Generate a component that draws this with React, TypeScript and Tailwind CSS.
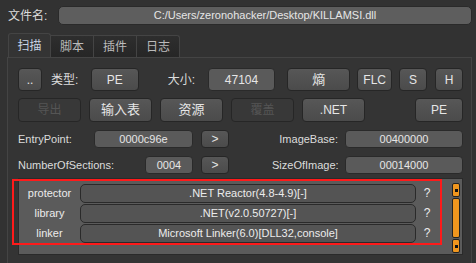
import React from 'react'

const font = { fontFamily: '"Liberation Sans", "Noto Sans CJK SC", sans-serif' }

function Btn({ children, className = '', disabled = false }: { children: React.ReactNode; className?: string; disabled?: boolean }) {
  return (
    <div
      className={
        'flex items-center justify-center rounded-[4px] border text-[12px] ' +
        (disabled
          ? 'border-[#262626] bg-[#383838] text-[#555555] '
          : 'border-[#262626] bg-gradient-to-b from-[#575757] to-[#4b4b4b] text-[#e6e6e6] ') +
        className
      }
    >
      {children}
    </div>
  )
}

function Field({ children, className = '' }: { children: React.ReactNode; className?: string }) {
  return (
    <div className={'flex items-center justify-center rounded-[4px] border border-[#2a2a2a] bg-[#5a5a5a] text-[11px] text-[#e6e6e6] ' + className}>
      {children}
    </div>
  )
}

const detections = [
  { type: 'protector', value: '.NET Reactor(4.8-4.9)[-]' },
  { type: 'library', value: '.NET(v2.0.50727)[-]' },
  { type: 'linker', value: 'Microsoft Linker(6.0)[DLL32,console]' },
]

export default function App() {
  return (
    <div className="relative h-[263px] w-[476px] overflow-hidden bg-[#323232] text-[#dcdcdc]" style={font}>
      {/* file name */}
      <div className="flex h-[19px] items-center pl-[8px] pr-[4px] mt-[6px]">
        <span className="w-[50px] text-[12px]">文件名:</span>
        <div className="flex h-[19px] flex-1 items-center justify-center rounded-[5px] border border-[#2a2a2a] bg-[#5e5e5e] text-[11px] text-[#e6e6e6]">
          C:/Users/zeronohacker/Desktop/KILLAMSI.dll
        </div>
      </div>

      {/* tabs */}
      <div className="mt-[8px] flex h-[24px] items-end pl-[8px]">
        <div className="flex h-[24px] w-[43px] items-center justify-center rounded-t-[3px] border border-b-0 border-[#444444] bg-[#343434] text-[12px] text-[#c8d4e6]">扫描</div>
        <div className="flex h-[22px] w-[43px] items-center justify-center border border-l-0 border-b-0 border-[#444444] bg-gradient-to-b from-[#2e2e2e] to-[#262626] text-[12px] text-[#bbbbbb]">脚本</div>
        <div className="flex h-[22px] w-[43px] items-center justify-center border border-l-0 border-b-0 border-[#444444] bg-gradient-to-b from-[#2e2e2e] to-[#262626] text-[12px] text-[#bbbbbb]">插件</div>
        <div className="flex h-[22px] w-[43px] items-center justify-center rounded-tr-[3px] border border-l-0 border-b-0 border-[#444444] bg-gradient-to-b from-[#2e2e2e] to-[#262626] text-[12px] text-[#bbbbbb]">日志</div>
      </div>

      {/* main panel */}
      <div className="ml-[7px] mr-[4px] h-[220px] border border-[#444444] bg-[#343434] pl-[10px] pr-[8px] pt-[10px]">
        <div className="flex h-[23px] items-center">
          <Btn className="h-[23px] w-[24px]">..</Btn>
          <span className="ml-[9px] w-[40px] text-[12px]">类型:</span>
          <Btn className="h-[23px] w-[48px]">PE</Btn>
          <span className="ml-[29px] w-[40px] text-[12px]">大小:</span>
          <Field className="h-[23px] w-[68px] text-[12px]">47104</Field>
          <Btn className="ml-[12px] h-[23px] w-[63px] text-[13px]">熵</Btn>
          <Btn className="ml-[7px] h-[23px] w-[35px]">FLC</Btn>
          <Btn className="ml-[7px] h-[23px] w-[28px]">S</Btn>
          <Btn className="ml-[8px] h-[23px] w-[28px]">H</Btn>
        </div>

        <div className="mt-[7px] flex h-[24px] items-center">
          <Btn disabled className="h-[24px] w-[63px]">导出</Btn>
          <Btn className="ml-[8px] h-[24px] w-[63px] text-[13px]">输入表</Btn>
          <Btn className="ml-[8px] h-[24px] w-[63px] text-[13px]">资源</Btn>
          <Btn disabled className="ml-[8px] h-[24px] w-[63px]">覆盖</Btn>
          <Btn className="ml-[8px] h-[24px] w-[63px]">.NET</Btn>
          <Btn className="ml-auto h-[24px] w-[48px]">PE</Btn>
        </div>

        <div className="mt-[8px] flex h-[18px] items-center text-[11px]">
          <span className="w-[76px]">EntryPoint:</span>
          <Field className="h-[18px] w-[99px]">0000c96e</Field>
          <Btn className="ml-[8px] h-[18px] w-[28px] text-[11px]">&gt;</Btn>
          <span className="ml-auto mr-[7px] w-[66px] text-right">ImageBase:</span>
          <Field className="h-[18px] w-[118px]">00400000</Field>
        </div>

        <div className="mt-[8px] flex h-[18px] items-center text-[11px]">
          <span className="w-[127px]">NumberOfSections:</span>
          <Field className="h-[18px] w-[48px]">0004</Field>
          <Btn className="ml-[8px] h-[18px] w-[28px] text-[11px]">&gt;</Btn>
          <span className="ml-auto mr-[7px] w-[66px] text-right">SizeOfImage:</span>
          <Field className="h-[18px] w-[118px]">00014000</Field>
        </div>

        {/* detections */}
        <div className="mt-[4px] flex h-[77px] border border-[#2a2a2a] bg-[#5b5b5b] pr-[2px] pt-[4px]">
          <div className="flex flex-1 flex-col">
            {detections.map(d => (
              <div key={d.type} className="flex h-[20px] items-center text-[11px]">
                <span className="w-[61px] text-center text-[#ececec]">{d.type}</span>
                <div className="flex h-[19px] flex-1 items-center justify-center rounded-[5px] border border-[#2a2a2a] bg-[#545454] text-[#ececec]">
                  {d.value}
                </div>
                <span className="w-[22px] text-center text-[12px] text-[#ececec]">?</span>
              </div>
            ))}
          </div>
          {/* scrollbar */}
          <div className="ml-[14px] flex h-[70px] w-[8px] flex-col gap-[1px]">
            <div className="flex h-[14px] items-center justify-center rounded-[2px] border border-[#222222] bg-[#f0961e]">
              <div className="h-[3px] w-[3px] bg-[#111111]" />
            </div>
            <div className="flex-1 rounded-[2px] border border-[#222222] bg-[#f0961e]" />
            <div className="flex h-[14px] items-center justify-center rounded-[2px] border border-[#222222] bg-[#f0961e]">
              <div className="h-[3px] w-[3px] bg-[#111111]" />
            </div>
          </div>
        </div>
      </div>

      {/* red highlight annotation */}
      <div className="pointer-events-none absolute left-[12px] top-[179px] h-[66px] w-[430px] border-[2.5px] border-[#ff1a1a]" />
    </div>
  )
}
